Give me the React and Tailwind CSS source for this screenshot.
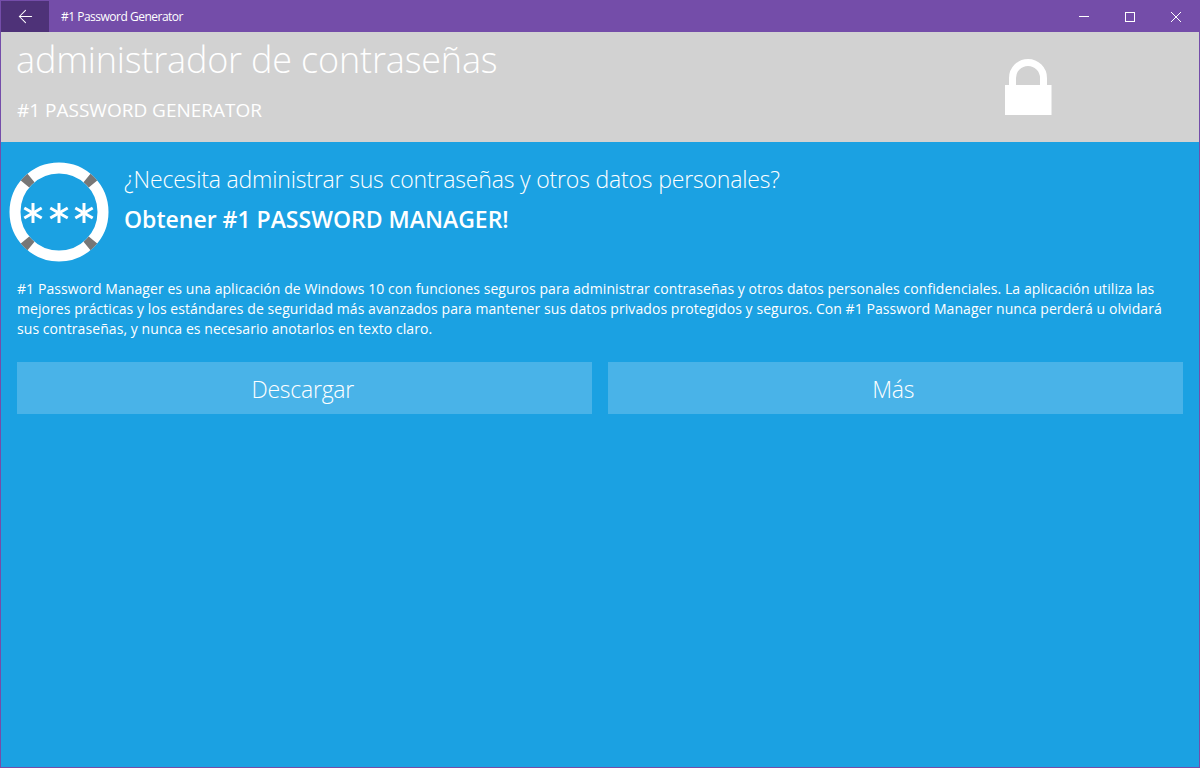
import React from "react";
import { ArrowLeft } from "lucide-react";

const font = { fontFamily: '"Open Sans", "Noto Sans", sans-serif' };

const Star = ({ x }) => (
  <g transform={`translate(${x} 51)`} stroke="white" strokeWidth="3">
    <path d="M0 -10V10" />
    <path d="M-8.700 -5L8.700 5" />
    <path d="M-8.700 5L8.700 -5" />
  </g>
);

const Logo = () => (
  <svg width="100" height="100" viewBox="0 0 100 100" className="shrink-0">
    <circle cx="50" cy="50" r="44" fill="none" stroke="white" strokeWidth="11" />
    <g fill="none" stroke="#777777" strokeWidth="11">
      <path d="M16 22A44 44 0 0 1 22 16" />
      <path d="M78 16A44 44 0 0 1 84 22" />
      <path d="M16 78A44 44 0 0 0 22 84" />
      <path d="M78 84A44 44 0 0 0 84 78" />
    </g>
    <Star x={24} />
    <Star x={50} />
    <Star x={75} />
  </svg>
);

const App = () => {
  return (
    <div
      className="flex flex-col w-[1200px] h-[768px] overflow-hidden border border-[#744da9] bg-[#1ba1e2] text-white"
      style={font}
    >
      {/* title bar */}
      <div className="flex items-center h-[31px] shrink-0 bg-[#744da9]">
        <div className="flex items-center justify-center w-[48px] h-full bg-[#4e3278]">
          <ArrowLeft size={21} strokeWidth={1.2} />
        </div>
        <div className="ml-[12px] text-[12px] tracking-[-0.5px]">#1 Password Generator</div>
        <div className="flex ml-auto h-full">
          <div className="flex items-center justify-center w-[46px]">
            <div className="w-[10px] h-px bg-white" />
          </div>
          <div className="flex items-center justify-center w-[46px]">
            <div className="w-[10px] h-[10px] border border-white" />
          </div>
          <div className="flex items-center justify-center w-[46px]">
            <svg width="10" height="10" viewBox="0 0 10 10" stroke="white" strokeWidth="1">
              <path d="M0 0L10 10M10 0L0 10" />
            </svg>
          </div>
        </div>
      </div>

      {/* header */}
      <div className="relative h-[110px] shrink-0 bg-[#d2d2d2] pl-[15px]">
        <div className="text-[36px] leading-[44px] pt-[6px] h-[58px] font-light tracking-[-0.18px]">
          administrador de contraseñas
        </div>
        <div className="mt-[7px] text-[19px] leading-[26px] pl-px">#1 PASSWORD GENERATOR</div>
        <svg
          className="absolute left-[1003px] top-[27px]"
          width="48"
          height="56"
          viewBox="0 0 48 56"
          fill="white"
        >
          <path d="M1 26H47.500V56H1Z" />
          <path d="M8.500 27V19A15.500 15.500 0 0 1 39.500 19V27" fill="none" stroke="white" strokeWidth="7" />
        </svg>
      </div>

      {/* promo */}
      <div className="flex pt-[20px] pl-[8px]">
        <Logo />
        <div className="ml-[15px] -mt-[2px]">
          <div className="text-[23px] leading-[38px] tracking-[-0.17px] font-light">
            ¿Necesita administrar sus contraseñas y otros datos personales?
          </div>
          <div className="mt-[2px] text-[23px] leading-[38px] font-semibold">
            Obtener #1 PASSWORD MANAGER!
          </div>
        </div>
      </div>

      <p className="mx-[16px] mt-[17px] text-[14px] leading-[20px] tracking-[0.07px]">
        #1 Password Manager es una aplicación de Windows 10 con funciones seguros para administrar contraseñas y otros datos personales confidenciales. La aplicación utiliza las mejores prácticas y los estándares de seguridad más avanzados para mantener sus datos privados protegidos y seguros. Con #1 Password Manager nunca perderá u olvidará sus contraseñas, y nunca es necesario anotarlos en texto claro.
      </p>

      <div className="flex gap-[16px] mx-[16px] mt-[23px]">
        <button className="flex-1 h-[52px] pt-[3px] pr-[3px] bg-[#49b3e8] text-[23px] font-light tracking-[-0.25px]">Descargar</button>
        <button className="flex-1 h-[52px] pt-[3px] pr-[4px] bg-[#49b3e8] text-[23px] font-light tracking-[-0.25px]">Más</button>
      </div>
    </div>
  );
};

export default App;
